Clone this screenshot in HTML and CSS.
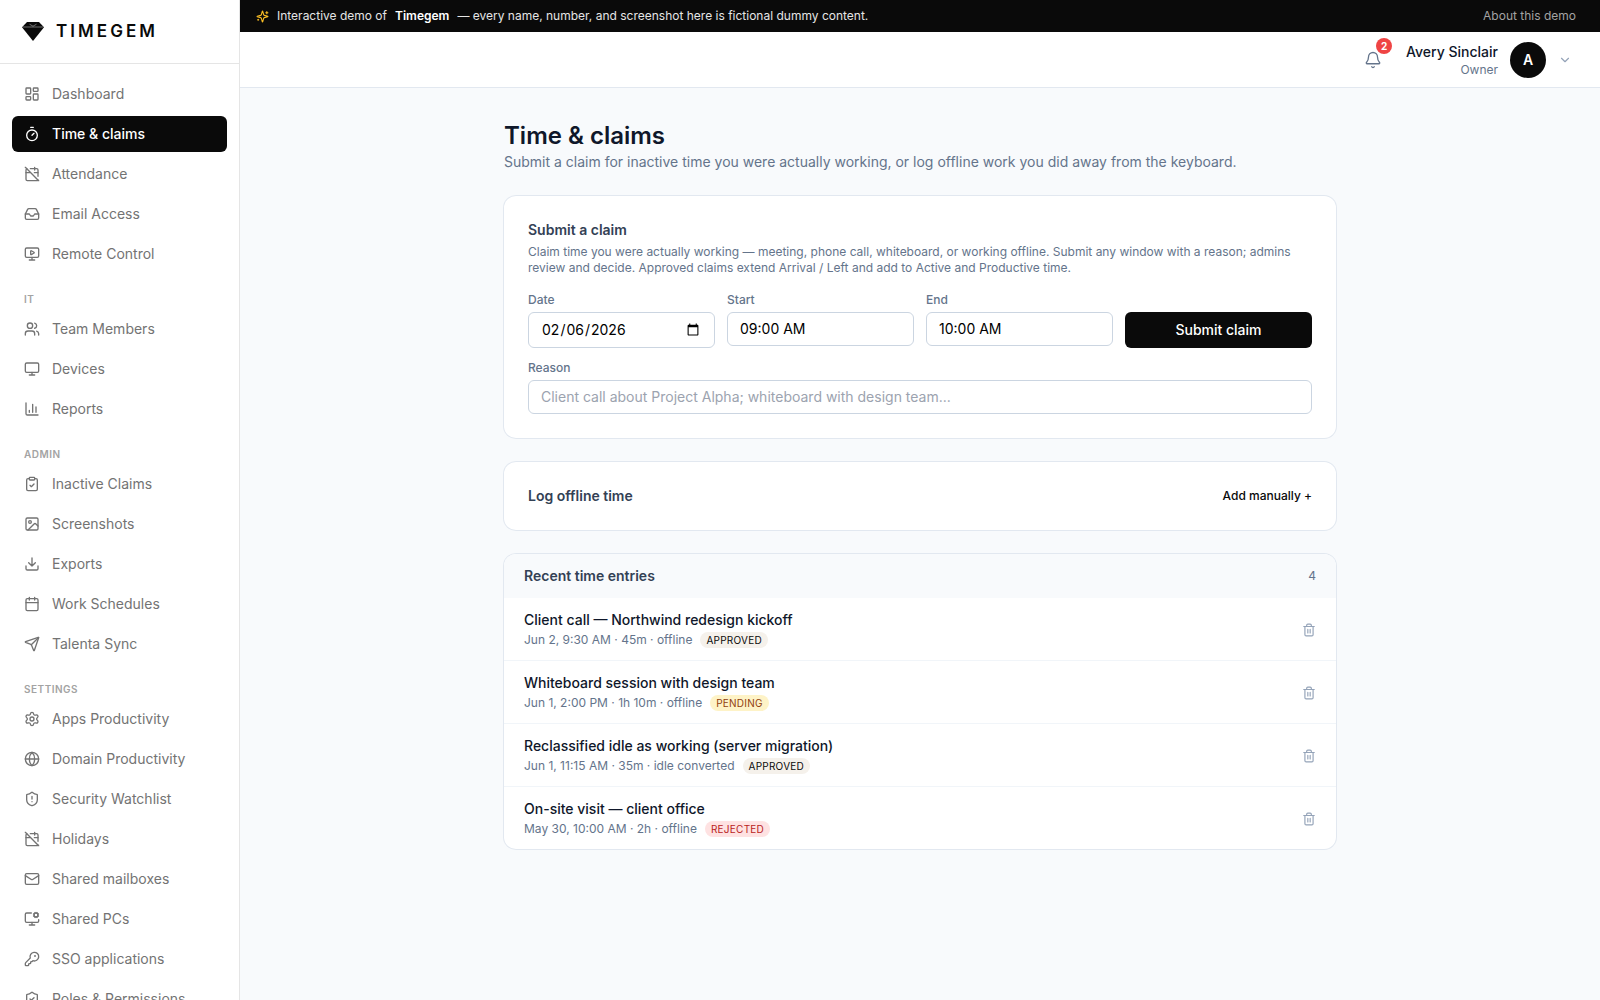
FILE: index.html
```html
<!DOCTYPE html>
<html lang="en">
<head>
    <meta charset="UTF-8">
    <meta name="viewport" content="width=device-width, initial-scale=1.0">
    <title>Timegem - Time &amp; claims</title>
    <link rel="stylesheet" href="styles.css">
</head>
<body>

<!-- Icon sprite -->
<svg class="sprite" xmlns="http://www.w3.org/2000/svg">
    <symbol id="i-dashboard" viewBox="0 0 24 24"><rect width="7" height="9" x="3" y="3" rx="1"/><rect width="7" height="5" x="14" y="3" rx="1"/><rect width="7" height="9" x="14" y="12" rx="1"/><rect width="7" height="5" x="3" y="16" rx="1"/></symbol>
    <symbol id="i-timer" viewBox="0 0 24 24"><path d="M10 2h4M12 14l3-3"/><circle cx="12" cy="14" r="8"/></symbol>
    <symbol id="i-calendar-off" viewBox="0 0 24 24"><path d="M4.2 4.2A2 2 0 0 0 3 6v14a2 2 0 0 0 2 2h14a2 2 0 0 0 1.82-1.18"/><path d="M21 15.5V6a2 2 0 0 0-2-2H9.5"/><path d="M16 2v4M3 10h7M21 10h-5.5M2 2l20 20"/></symbol>
    <symbol id="i-inbox" viewBox="0 0 24 24"><path d="M22 12h-6l-2 3h-4l-2-3H2"/><path d="M5.45 5.11 2 12v6a2 2 0 0 0 2 2h16a2 2 0 0 0 2-2v-6l-3.45-6.89A2 2 0 0 0 16.76 4H7.24a2 2 0 0 0-1.79 1.11z"/></symbol>
    <symbol id="i-monitor-play" viewBox="0 0 24 24"><path d="M15.033 9.44a.647.647 0 0 1 0 1.12l-4.065 2.352a.645.645 0 0 1-.968-.56V7.648a.645.645 0 0 1 .967-.56z"/><path d="M12 17v4M8 21h8"/><rect x="2" y="3" width="20" height="14" rx="2"/></symbol>
    <symbol id="i-users" viewBox="0 0 24 24"><path d="M16 21v-2a4 4 0 0 0-4-4H6a4 4 0 0 0-4 4v2"/><circle cx="9" cy="7" r="4"/><path d="M22 21v-2a4 4 0 0 0-3-3.87M16 3.13a4 4 0 0 1 0 7.75"/></symbol>
    <symbol id="i-monitor" viewBox="0 0 24 24"><rect width="20" height="14" x="2" y="3" rx="2"/><path d="M8 21h8M12 17v4"/></symbol>
    <symbol id="i-chart" viewBox="0 0 24 24"><path d="M3 3v16a2 2 0 0 0 2 2h16M18 17V9M13 17V5M8 17v-3"/></symbol>
    <symbol id="i-clipboard" viewBox="0 0 24 24"><rect width="8" height="4" x="8" y="2" rx="1"/><path d="M16 4h2a2 2 0 0 1 2 2v14a2 2 0 0 1-2 2H6a2 2 0 0 1-2-2V6a2 2 0 0 1 2-2h2M9 14l2 2 4-4"/></symbol>
    <symbol id="i-image" viewBox="0 0 24 24"><rect width="18" height="18" x="3" y="3" rx="2"/><circle cx="9" cy="9" r="2"/><path d="m21 15-3.086-3.086a2 2 0 0 0-2.828 0L6 21"/></symbol>
    <symbol id="i-download" viewBox="0 0 24 24"><path d="M12 15V3M21 15v4a2 2 0 0 1-2 2H5a2 2 0 0 1-2-2v-4M7 10l5 5 5-5"/></symbol>
    <symbol id="i-calendar" viewBox="0 0 24 24"><path d="M8 2v4M16 2v4M3 10h18"/><rect width="18" height="18" x="3" y="4" rx="2"/></symbol>
    <symbol id="i-send" viewBox="0 0 24 24"><path d="M14.536 21.686a.5.5 0 0 0 .937-.024l6.5-19a.496.496 0 0 0-.635-.635l-19 6.5a.5.5 0 0 0-.024.937l7.93 3.18a2 2 0 0 1 1.112 1.11z"/><path d="m21.854 2.147-10.94 10.939"/></symbol>
    <symbol id="i-settings" viewBox="0 0 24 24"><path d="M9.671 4.136a2.34 2.34 0 0 1 4.659 0 2.34 2.34 0 0 0 3.319 1.915 2.34 2.34 0 0 1 2.33 4.033 2.34 2.34 0 0 0 0 3.831 2.34 2.34 0 0 1-2.33 4.033 2.34 2.34 0 0 0-3.319 1.915 2.34 2.34 0 0 1-4.659 0 2.34 2.34 0 0 0-3.32-1.915 2.34 2.34 0 0 1-2.33-4.033 2.34 2.34 0 0 0 0-3.831A2.34 2.34 0 0 1 6.35 6.051a2.34 2.34 0 0 0 3.319-1.915"/><circle cx="12" cy="12" r="3"/></symbol>
    <symbol id="i-globe" viewBox="0 0 24 24"><circle cx="12" cy="12" r="10"/><path d="M12 2a14.5 14.5 0 0 0 0 20 14.5 14.5 0 0 0 0-20M2 12h20"/></symbol>
    <symbol id="i-shield-alert" viewBox="0 0 24 24"><path d="M20 13c0 5-3.5 7.5-7.66 8.95a1 1 0 0 1-.67-.01C7.5 20.5 4 18 4 13V6a1 1 0 0 1 1-1c2 0 4.5-1.2 6.24-2.72a1.17 1.17 0 0 1 1.52 0C14.51 3.81 17 5 19 5a1 1 0 0 1 1 1z"/><path d="M12 8v4M12 16h.01"/></symbol>
    <symbol id="i-shield-check" viewBox="0 0 24 24"><path d="M20 13c0 5-3.5 7.5-7.66 8.95a1 1 0 0 1-.67-.01C7.5 20.5 4 18 4 13V6a1 1 0 0 1 1-1c2 0 4.5-1.2 6.24-2.72a1.17 1.17 0 0 1 1.52 0C14.51 3.81 17 5 19 5a1 1 0 0 1 1 1z"/><path d="m9 12 2 2 4-4"/></symbol>
    <symbol id="i-mail" viewBox="0 0 24 24"><rect x="2" y="4" width="20" height="16" rx="2"/><path d="m22 7-8.991 5.727a2 2 0 0 1-2.009 0L2 7"/></symbol>
    <symbol id="i-monitor-cog" viewBox="0 0 24 24"><path d="M12 17v4M8 21h8M14.305 7.53l.923-.382M15.228 4.852l-.923-.383M16.852 3.228l-.383-.924M16.852 8.772l-.383.923M19.148 3.228l.383-.924M19.53 9.696l-.382-.924M20.772 4.852l.924-.383M20.772 7.148l.924.383"/><path d="M22 13v2a2 2 0 0 1-2 2H4a2 2 0 0 1-2-2V5a2 2 0 0 1 2-2h7"/><circle cx="18" cy="6" r="3"/></symbol>
    <symbol id="i-key" viewBox="0 0 24 24"><path d="M2.586 17.414A2 2 0 0 0 2 18.828V21a1 1 0 0 0 1 1h3a1 1 0 0 0 1-1v-1a1 1 0 0 1 1-1h1a1 1 0 0 0 1-1v-1a1 1 0 0 1 1-1h.172a2 2 0 0 0 1.414-.586l.814-.814a6.5 6.5 0 1 0-4-4z"/><circle cx="16.5" cy="7.5" r=".5" fill="currentColor"/></symbol>
    <symbol id="i-bell" viewBox="0 0 24 24"><path d="M10.268 21a2 2 0 0 0 3.464 0"/><path d="M3.262 15.326A1 1 0 0 0 4 17h16a1 1 0 0 0 .74-1.673C19.41 13.956 18 12.499 18 8A6 6 0 0 0 6 8c0 4.499-1.411 5.956-2.738 7.326"/></symbol>
    <symbol id="i-chevron" viewBox="0 0 24 24"><path d="m6 9 6 6 6-6"/></symbol>
    <symbol id="i-sparkles" viewBox="0 0 24 24"><path d="M9.937 15.5A2 2 0 0 0 8.5 14.063l-6.135-1.582a.5.5 0 0 1 0-.962L8.5 9.936A2 2 0 0 0 9.937 8.5l1.582-6.135a.5.5 0 0 1 .963 0L14.063 8.5A2 2 0 0 0 15.5 9.937l6.135 1.581a.5.5 0 0 1 0 .964L15.5 14.063a2 2 0 0 0-1.437 1.437l-1.582 6.135a.5.5 0 0 1-.963 0z"/><path d="M20 3v4M22 5h-4M4 17v2M5 18H3"/></symbol>
    <symbol id="i-trash" viewBox="0 0 24 24"><path d="M3 6h18M19 6v14a2 2 0 0 1-2 2H7a2 2 0 0 1-2-2V6M8 6V4a2 2 0 0 1 2-2h4a2 2 0 0 1 2 2v2M10 11v6M14 11v6"/></symbol>
</svg>

<div class="app">
    <!-- Sidebar -->
    <aside class="sidebar">
        <div class="brand">
            <svg class="brand-gem" viewBox="0 0 22 19">
                <path class="gem-body" d="M5 0h12l5 5.2L11 19 0 5.2z"/>
                <path class="gem-line" d="M1 5h20M7.5 2.2l3.5 2 3.5-2"/>
            </svg>
            <span class="brand-name">TIMEGEM</span>
        </div>
        <nav class="nav">
            <div class="nav-group">
                <a class="nav-item"><svg class="icon"><use href="#i-dashboard"/></svg>Dashboard</a>
                <a class="nav-item active"><svg class="icon"><use href="#i-timer"/></svg>Time &amp; claims</a>
                <a class="nav-item"><svg class="icon"><use href="#i-calendar-off"/></svg>Attendance</a>
                <a class="nav-item"><svg class="icon"><use href="#i-inbox"/></svg>Email Access</a>
                <a class="nav-item"><svg class="icon"><use href="#i-monitor-play"/></svg>Remote Control</a>
            </div>
            <div class="nav-group">
                <div class="nav-label">IT</div>
                <a class="nav-item"><svg class="icon"><use href="#i-users"/></svg>Team Members</a>
                <a class="nav-item"><svg class="icon"><use href="#i-monitor"/></svg>Devices</a>
                <a class="nav-item"><svg class="icon"><use href="#i-chart"/></svg>Reports</a>
            </div>
            <div class="nav-group">
                <div class="nav-label">Admin</div>
                <a class="nav-item"><svg class="icon"><use href="#i-clipboard"/></svg>Inactive Claims</a>
                <a class="nav-item"><svg class="icon"><use href="#i-image"/></svg>Screenshots</a>
                <a class="nav-item"><svg class="icon"><use href="#i-download"/></svg>Exports</a>
                <a class="nav-item"><svg class="icon"><use href="#i-calendar"/></svg>Work Schedules</a>
                <a class="nav-item"><svg class="icon"><use href="#i-send"/></svg>Talenta Sync</a>
            </div>
            <div class="nav-group">
                <div class="nav-label">Settings</div>
                <a class="nav-item"><svg class="icon"><use href="#i-settings"/></svg>Apps Productivity</a>
                <a class="nav-item"><svg class="icon"><use href="#i-globe"/></svg>Domain Productivity</a>
                <a class="nav-item"><svg class="icon"><use href="#i-shield-alert"/></svg>Security Watchlist</a>
                <a class="nav-item"><svg class="icon"><use href="#i-calendar-off"/></svg>Holidays</a>
                <a class="nav-item"><svg class="icon"><use href="#i-mail"/></svg>Shared mailboxes</a>
                <a class="nav-item"><svg class="icon"><use href="#i-monitor-cog"/></svg>Shared PCs</a>
                <a class="nav-item"><svg class="icon"><use href="#i-key"/></svg>SSO applications</a>
                <a class="nav-item"><svg class="icon"><use href="#i-shield-check"/></svg>Roles &amp; Permissions</a>
            </div>
        </nav>
    </aside>

    <div class="page">
        <!-- Demo banner -->
        <div class="banner">
            <svg class="icon banner-icon"><use href="#i-sparkles"/></svg>
            <span>Interactive demo of</span>
            <strong>Timegem</strong>
            <span>— every name, number, and screenshot here is fictional dummy content.</span>
            <a class="banner-link">About this demo</a>
        </div>

        <!-- Top bar -->
        <header class="topbar">
            <button class="bell">
                <svg class="icon bell-icon"><use href="#i-bell"/></svg>
                <span class="bell-count">2</span>
            </button>
            <div class="user">
                <div class="user-text">
                    <div class="user-name">Avery Sinclair</div>
                    <div class="user-role">Owner</div>
                </div>
                <div class="avatar">A</div>
                <svg class="icon user-chevron"><use href="#i-chevron"/></svg>
            </div>
        </header>

        <main class="content">
            <div class="heading">
                <h1>Time &amp; claims</h1>
                <p>Submit a claim for inactive time you were actually working, or log offline work you did away from the keyboard.</p>
            </div>

            <!-- Claim form -->
            <section class="card card-body">
                <h2>Submit a claim</h2>
                <p class="hint">Claim time you were actually working — meeting, phone call, whiteboard, or working offline. Submit any window with a reason; admins review and decide. Approved claims extend Arrival / Left and add to Active and Productive time.</p>
                <form class="claim-form">
                    <label class="field">Date<input type="date" value="2026-02-06"></label>
                    <label class="field">Start<input type="text" value="09:00 AM"></label>
                    <label class="field">End<input type="text" value="10:00 AM"></label>
                    <button type="button" class="submit-btn">Submit claim</button>
                    <label class="field field-wide">Reason<input type="text" placeholder="Client call about Project Alpha; whiteboard with design team..."></label>
                </form>
            </section>

            <section class="card card-body card-row">
                <h2>Log offline time</h2>
                <a class="add-link">Add manually +</a>
            </section>

            <!-- Recent entries -->
            <section class="card entries">
                <div class="entries-head">
                    <h2>Recent time entries</h2>
                    <span class="entries-count">4</span>
                </div>
                <div class="entry">
                    <div>
                        <div class="entry-title">Client call — Northwind redesign kickoff</div>
                        <div class="entry-meta">Jun 2, 9:30 AM · 45m · offline<span class="badge approved">Approved</span></div>
                    </div>
                    <svg class="icon trash"><use href="#i-trash"/></svg>
                </div>
                <div class="entry">
                    <div>
                        <div class="entry-title">Whiteboard session with design team</div>
                        <div class="entry-meta">Jun 1, 2:00 PM · 1h 10m · offline<span class="badge pending">Pending</span></div>
                    </div>
                    <svg class="icon trash"><use href="#i-trash"/></svg>
                </div>
                <div class="entry">
                    <div>
                        <div class="entry-title">Reclassified idle as working (server migration)</div>
                        <div class="entry-meta">Jun 1, 11:15 AM · 35m · idle converted<span class="badge approved">Approved</span></div>
                    </div>
                    <svg class="icon trash"><use href="#i-trash"/></svg>
                </div>
                <div class="entry">
                    <div>
                        <div class="entry-title">On-site visit — client office</div>
                        <div class="entry-meta">May 30, 10:00 AM · 2h · offline<span class="badge rejected">Rejected</span></div>
                    </div>
                    <svg class="icon trash"><use href="#i-trash"/></svg>
                </div>
            </section>
        </main>
    </div>
</div>

</body>
</html>
```
FILE: styles.css
```css
* {
    box-sizing: border-box;
}

body {
    margin: 0;
    font-family: Inter, "Liberation Sans", sans-serif;
    font-size: 14px;
    line-height: 20px;
    color: #0f172a;
    background-color: #f8fafc;
}

h1, h2, p {
    margin: 0;
}

button, input {
    font: inherit;
}

.sprite {
    display: none;
}

.icon {
    width: 16px;
    height: 16px;
    flex-shrink: 0;
    fill: none;
    stroke: currentColor;
    stroke-width: 2;
    stroke-linecap: round;
    stroke-linejoin: round;
}

.app {
    display: flex;
    height: 100vh;
    overflow: hidden;
}

/* Sidebar */
.sidebar {
    width: 240px;
    flex-shrink: 0;
    background-color: #fff;
    border-right: 1px solid #e5e5e5;
    overflow: hidden;
}

.brand {
    display: flex;
    align-items: center;
    gap: 12px;
    height: 64px;
    padding: 0 22px 1px;
    border-bottom: 1px solid #e5e5e5;
}

.brand-gem {
    width: 22px;
    height: 19px;
}

.gem-body {
    fill: #0a0a0a;
}

.gem-line {
    fill: none;
    stroke: #fff;
    stroke-width: 0.6;
    opacity: 0.7;
}

.brand-name {
    font-size: 17px;
    font-weight: 600;
    letter-spacing: 0.18em;
    color: #0a0a0a;
}

.nav {
    display: flex;
    flex-direction: column;
    gap: 20px;
    padding: 12px;
}

.nav-group {
    display: flex;
    flex-direction: column;
    gap: 4px;
}

.nav-label {
    padding: 0 12px;
    font-size: 10px;
    line-height: 15px;
    font-weight: 600;
    letter-spacing: 0.05em;
    text-transform: uppercase;
    color: #a3a3a3;
}

.nav-item {
    display: flex;
    align-items: center;
    gap: 12px;
    height: 36px;
    padding: 0 12px;
    border-radius: 6px;
    color: #737373;
}

.nav-item.active {
    background-color: #0a0a0a;
    color: #fff;
    font-weight: 500;
}

/* Banner and top bar */
.page {
    flex: 1;
    min-width: 0;
}

.banner {
    display: flex;
    align-items: center;
    gap: 8px;
    height: 32px;
    padding: 0 24px 0 16px;
    background-color: #0a0a0a;
    color: #e5e5e5;
    font-size: 12px;
    line-height: 16px;
}

.banner strong {
    font-weight: 600;
    color: #fff;
}

.banner-icon {
    width: 13px;
    height: 13px;
    color: #fbbf24;
}

.banner-link {
    margin-left: auto;
    color: #a3a3a3;
}

.topbar {
    display: flex;
    align-items: center;
    justify-content: flex-end;
    gap: 16px;
    height: 56px;
    padding: 0 28px 0 24px;
    background-color: #fff;
    border-bottom: 1px solid #e2e8f0;
}

.bell {
    position: relative;
    display: flex;
    padding: 8px;
    border: none;
    background: none;
    color: #64748b;
}

.bell-icon {
    width: 18px;
    height: 18px;
    stroke-width: 1.75;
}

.bell-count {
    position: absolute;
    top: -5px;
    right: -2px;
    width: 16px;
    height: 16px;
    border-radius: 50%;
    background-color: #ef4444;
    color: #fff;
    font-size: 10px;
    line-height: 16px;
    font-weight: 700;
    text-align: center;
}

.user {
    display: flex;
    align-items: center;
    gap: 12px;
}

.user-text {
    text-align: right;
}

.user-name {
    font-weight: 500;
}

.user-role {
    font-size: 12px;
    line-height: 16px;
    color: #64748b;
}

.avatar {
    width: 36px;
    height: 36px;
    border-radius: 50%;
    background-color: #0a0a0a;
    color: #fff;
    font-weight: 600;
    line-height: 36px;
    text-align: center;
}

.user-chevron {
    width: 14px;
    height: 14px;
    color: #94a3b8;
}

/* Content */
.content {
    display: flex;
    flex-direction: column;
    gap: 24px;
    max-width: 896px;
    margin: 0 auto;
    padding: 32px;
}

h1 {
    font-size: 24px;
    line-height: 32px;
    font-weight: 600;
}

.heading p {
    color: #64748b;
}

h2 {
    font-size: 14px;
    line-height: 20px;
    font-weight: 600;
    color: #334155;
}

.card {
    border-radius: 12px;
    background-color: #fff;
    box-shadow: 0 0 0 1px #e2e8f0;
}

.card-body {
    padding: 24px;
}

.card-row {
    display: flex;
    align-items: center;
    justify-content: space-between;
}

.hint {
    margin-top: 4px;
    font-size: 12px;
    line-height: 16px;
    color: #64748b;
}

.claim-form {
    display: grid;
    grid-template-columns: repeat(4, 1fr);
    gap: 12px;
    margin-top: 16px;
}

.field {
    display: flex;
    flex-direction: column;
    gap: 4px;
    font-size: 12px;
    line-height: 16px;
    font-weight: 500;
    color: #64748b;
}

.field-wide {
    grid-column: 1 / -1;
}

.field input {
    width: 100%;
    height: 34px;
    padding: 5px 12px 7px;
    border: 1px solid #cbd5e1;
    border-radius: 6px;
    background-color: #fff;
    color: #000;
    font-size: 14px;
    line-height: 20px;
    font-weight: 400;
}

.field input[type="date"] {
    height: 36px;
    padding: 6px 12px;
}

.field input::placeholder {
    color: #9ca3af;
}

.submit-btn {
    align-self: end;
    height: 36px;
    border: none;
    border-radius: 6px;
    background-color: #0a0a0a;
    color: #fff;
    font-weight: 500;
}

.add-link {
    font-size: 12px;
    line-height: 16px;
    font-weight: 500;
    color: #0a0a0a;
}

/* Entries list */
.entries {
    overflow: hidden;
}

.entries-head {
    display: flex;
    align-items: center;
    justify-content: space-between;
    padding: 12px 20px;
    background-color: #f8fafc;
}

.entries-count {
    font-size: 12px;
    line-height: 16px;
    color: #64748b;
}

.entry {
    display: flex;
    align-items: center;
    justify-content: space-between;
    padding: 12px 20px;
}

.entry + .entry {
    border-top: 1px solid #f1f5f9;
}

.entry-title {
    font-weight: 500;
}

.entry-meta {
    display: flex;
    align-items: center;
    gap: 8px;
    margin-top: 2px;
    font-size: 12px;
    line-height: 16px;
    color: #64748b;
}

.badge {
    height: 16px;
    padding: 0 6px;
    border-radius: 8px;
    font-size: 10px;
    line-height: 17px;
    letter-spacing: 0.025em;
    text-transform: uppercase;
}

.approved {
    background-color: #f5f1eb;
    color: #0a0a0a;
}

.pending {
    background-color: #fef3c7;
    color: #92400e;
}

.rejected {
    background-color: #fee2e2;
    color: #b91c1c;
}

.trash {
    width: 14px;
    height: 14px;
    margin-top: 2px;
    color: #94a3b8;
}
```
